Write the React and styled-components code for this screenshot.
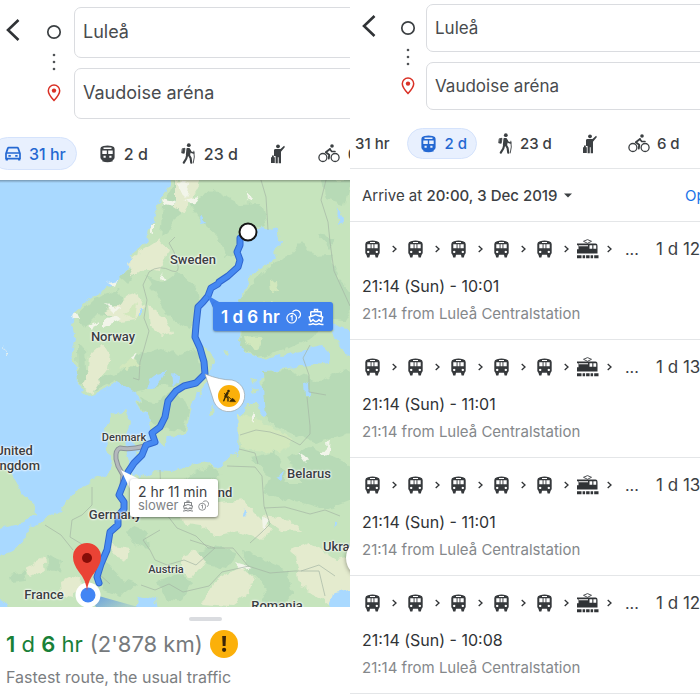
import styled, { createGlobalStyle } from "styled-components";
import { MdOutlineDirectionsBoat } from "react-icons/md";

const GlobalStyle = createGlobalStyle`
  *, *::before, *::after {
    box-sizing: border-box;
  }

  body {
    margin: 0;
    background: #fff;
    color: #3c4043;
    font-family: Inter, "Liberation Sans", sans-serif;
  }

  button, input {
    font: inherit;
    color: inherit;
  }
`;

const Page = styled.main`
  display: grid;
  grid-template-columns: 1fr 1fr;
  overflow: hidden;
`;

const Phone = styled.section`
  min-width: 0;
  overflow: hidden;
`;

/* Each phone screen is a little wider than its column and runs off the side */
const Screen = styled.div`
  width: calc(100% + 60px);
`;

const SearchHeader = styled.form`
  display: flex;
  align-items: flex-start;
  padding: ${(p) => (p.$compact ? "4px 8px 0 12px" : "7px 8px 0 6px")};
`;

const BackButton = styled.button`
  display: flex;
  align-items: center;
  width: ${(p) => (p.$compact ? 34 : 36)}px;
  height: ${(p) => (p.$compact ? 44 : 46)}px;
  padding: 0;
  border: 0;
  background: none;
`;

const StopMarks = styled.div`
  display: flex;
  flex-direction: column;
  align-items: center;
  justify-content: space-between;
  width: 24px;
  height: ${(p) => (p.$compact ? 106 : 111)}px;
  padding: ${(p) => (p.$compact ? "16px 0 15px" : "17px 0 16px")};
`;

const Fields = styled.div`
  flex: 1;
  display: flex;
  flex-direction: column;
  gap: 10px;
  margin-left: ${(p) => (p.$compact ? 6 : 8)}px;
`;

const Field = styled.input`
  width: 100%;
  height: ${(p) => (p.$compact ? 48 : 51)}px;
  padding: ${(p) => (p.$compact ? "0 8px" : "0 8px 2px")};
  border: 1px solid #dadce0;
  border-radius: 7px;
  background: #fff;
  color: #484b4e;
  font-size: ${(p) => (p.$compact ? 17 : 18)}px;
  outline: 0;
`;

const Modes = styled.nav`
  display: flex;
  gap: 8px;
  margin-left: ${(p) => (p.$compact ? -31 : -9)}px;
  padding: ${(p) => (p.$compact ? "18px 0 9px" : "18px 0 10px")};
`;

const ModeButton = styled.button`
  display: flex;
  align-items: center;
  gap: ${(p) => (p.$compact ? 7 : 8)}px;
  height: ${(p) => (p.$compact ? 31 : 33)}px;
  padding: ${(p) => (p.$compact ? "0 9px 0 12px" : "0 10px 0 13px")};
  border: 1px solid ${(p) => (p.$active ? "#d5e3fc" : "transparent")};
  border-radius: 17px;
  background: ${(p) => (p.$active ? "#e8f0fe" : "none")};
  color: ${(p) => (p.$active ? "#2468d2" : "#3c4043")};
  font-size: ${(p) => (p.$compact ? 15 : 16)}px;
  font-weight: 500;
  white-space: nowrap;

  svg {
    flex: none;
  }
`;

const MapView = styled.div`
  position: relative;
  aspect-ratio: 410 / 427;
  overflow: hidden;
  background: #a9d9ff;
`;

const MapDrawing = styled.svg`
  display: block;
  width: 100%;
  height: 100%;
`;

const Place = styled.span`
  position: absolute;
  transform: translate(-50%, -50%);
  color: #3b3f42;
  font: 500 ${(p) => (p.$small ? 11 : 13)}px/15px Roboto, sans-serif;
  text-align: center;
  white-space: pre;
  text-shadow: 0 0 2px #fff, 0 0 2px #fff, 0 0 3px #fff;
`;

const MainCallout = styled.div`
  position: absolute;
  display: flex;
  align-items: center;
  gap: 6px;
  height: 29px;
  padding: 0 8px;
  border-radius: 3px;
  background: #4082ed;
  color: #fff;
  font-size: 17px;
  font-weight: 600;
  white-space: nowrap;
  box-shadow: 0 1px 2px rgba(0, 0, 0, 0.35);
`;

const SideCallout = styled.div`
  position: absolute;
  width: 88px;
  height: 38px;
  padding: 5px 0 0 8px;
  border-radius: 3px;
  background: #fff;
  font-size: 14px;
  line-height: 15px;
  white-space: nowrap;
  box-shadow: 0 1px 3px rgba(0, 0, 0, 0.5);
`;

const CalloutNote = styled.div`
  display: flex;
  align-items: center;
  gap: 4px;
  color: #808386;
  font-size: 13px;
  line-height: 13px;
`;

const WorksBadge = styled.div`
  position: absolute;
  display: grid;
  place-items: center;
  width: 22px;
  height: 22px;
  border-radius: 50%;
  background: #fbb00a;
  color: #3a2a06;
  transform: translate(-50%, -50%);
`;

const LocateButton = styled.button`
  position: absolute;
  width: 40px;
  height: 40px;
  border: 0;
  border-radius: 50%;
  background: #fff;
  box-shadow: 0 1px 4px rgba(0, 0, 0, 0.4);
`;

const Sheet = styled.div`
  padding: 10px 6px 12px;
  background: #fff;
`;

const Handle = styled.div`
  width: 33px;
  height: 4px;
  margin: 0 auto;
  border-radius: 2px;
  background: #dadce0;
`;

const Summary = styled.h1`
  display: flex;
  align-items: center;
  gap: 7px;
  margin: 9px 0 0;
  color: #767a7d;
  font-size: 22px;
  font-weight: 400;
  line-height: 28px;
`;

const Green = styled.span`
  color: #188038;
  white-space: nowrap;

  b {
    font-weight: 600;
  }
`;

const Alert = styled.svg`
  flex: none;
`;

const SheetNote = styled.p`
  margin: 9px 0 0;
  color: #7b7e81;
  font-size: 16px;
  line-height: 20px;
`;

const ArriveRow = styled.div`
  display: flex;
  align-items: center;
  justify-content: space-between;
  height: 54px;
  padding: 0 20px 0 12px;
  border-top: 1px solid #e4e6e8;
  border-bottom: 1px solid #e4e6e8;
  font-size: 15px;
`;

const ArriveButton = styled.button`
  display: flex;
  align-items: center;
  gap: 6px;
  padding: 0;
  border: 0;
  background: none;
  white-space: pre;

  b {
    font-weight: 500;
  }
`;

const OptionsLink = styled.a`
  color: #1a73e8;
  text-decoration: none;
`;

const TripList = styled.ul`
  margin: 0;
  padding: 0;
  list-style: none;
`;

const Trip = styled.li`
  height: 118px;
  padding: 12px 0 0 12px;
  border-bottom: 1px solid #e4e6e8;
`;

const Legs = styled.div`
  display: flex;
  align-items: center;
  height: 30px;
  margin-left: 2px;
`;

const Leg = styled.span`
  display: flex;
  align-items: center;
  width: 43px;
`;

const LegIcon = styled.span`
  display: flex;
  justify-content: center;
  width: 17px;

  svg {
    flex: none;
  }
`;

const LegArrow = styled.svg`
  margin: 0 auto;
`;

const More = styled.span`
  width: 34px;
  padding-left: 3px;
  font-size: 16px;
`;

const Duration = styled.strong`
  font-size: 17px;
  font-weight: 400;
  white-space: nowrap;
`;

const TripTimes = styled.p`
  margin: 12px 0 0;
  color: #303336;
  font-size: 16px;
  line-height: 20px;
`;

const TripFrom = styled.p`
  margin: 8px 0 0;
  color: #85888b;
  font-size: 15px;
  line-height: 20px;
`;

const CarIcon = () => (
  <svg width="16" height="16" viewBox="0 0 16 16" fill="none" stroke="currentColor">
    <path d="M1 7.6 2.8 2.4Q3 1.7 3.7 1.7h8.6q.7 0 .9.7L15 7.6V12.6H1z" strokeWidth="1.7" strokeLinejoin="round" />
    <path d="M1.5 7h13" strokeWidth="1.5" />
    <path d="M1.8 12v2.6M14.2 12v2.6" strokeWidth="2.2" />
    <path d="M3.4 9.8h2.4M10.2 9.8h2.4" strokeWidth="1.7" />
  </svg>
);

const TransitIcon = () => (
  <svg width="17" height="18" viewBox="0 0 17 18">
    <path
      fill="currentColor"
      fillRule="evenodd"
      d="M4.5 1Q8.5 .2 12.5 1 15.600 1.600 15.600 4.200V12.500q0 2.200-2.200 2.700H3.600Q1.400 14.700 1.400 12.500V4.200Q1.400 1.600 4.500 1zM4.500 2.600v1.300h8V2.600zM3.300 5.500v3.600h4.500V5.500zM9.200 5.500v3.600h4.500V5.500zM4.500 10.800v2h2.200v-2zM10.300 10.800v2h2.200v-2z"
    />
    <path fill="currentColor" d="M3.500 15h10l.3 1.300q-5.300 2-10.600 0z" />
  </svg>
);

const TrainIcon = () => (
  <svg width="17" height="18" viewBox="0 0 17 18">
    <path
      fill="#36393c"
      fillRule="evenodd"
      d="M4 1.200Q8.500 0 13 1.200 15.700 1.800 15.700 4V12.800q0 1.700-1.700 2H3Q1.300 14.500 1.300 12.800V4Q1.300 1.800 4 1.200zM6 1.900v1h5v-1zM3.300 4.300v4h3.300v-4zM7.500 4.300v4h2v-4zM10.400 4.300v4h3.300v-4zM4.200 10.700a1.200 1.200 0 1 0 .01 0zM12.800 10.700a1.200 1.200 0 1 0 .01 0z"
    />
    <path fill="#36393c" d="M2.200 14h4l-.8 3.500H3.200zM10.800 14h4l-1 3.500h-2.200z" />
  </svg>
);

const TramIcon = () => (
  <svg width="23" height="20" viewBox="0 0 23 20">
    <path d="M11.500 4.300 7.500 2.300 11.500.6l4 1.700-4 2" fill="none" stroke="#3c4043" strokeWidth=".9" />
    <path
      fill="#303336"
      fillRule="evenodd"
      d="M1 4.600h18.500q2 0 2 2.200V14.500H1v-4.200h1.500V6.200H1zM3 6.300v1h9v-1zM13.500 6.300v3.500h2.800V6.300zM17.400 6.300v3.500h2.800V6.300z"
    />
    <path stroke="#303336" strokeWidth="3" strokeDasharray="4.500 1.100 2.500 1 3.500 1 2.500 1.100 4.500" d="M1 17.700h21.500" />
  </svg>
);

const HikerIcon = () => (
  <svg width="15" height="21" viewBox="0 0 15 21" fill="none" stroke="currentColor" strokeLinecap="round" strokeLinejoin="round">
    <circle cx="7.800" cy="2.200" r="1.900" fill="currentColor" stroke="none" />
    <path d="M6.200 5.800h2l1 2.300-.8 3.700-2.800.2z" fill="currentColor" strokeWidth="1.500" />
    <path d="M1.600 5.700 4 5.300 3.200 10.300 1 9.900z" fill="currentColor" strokeWidth=".8" />
    <path d="M8.700 7.300 10.200 9.200 12.700 9.900" strokeWidth="1.600" />
    <path d="M6.200 12 5.300 15.500 2.800 19.600M7.600 11.600l2 3.400.6 4.600" strokeWidth="2.100" />
    <path d="M12.800 8.200 13.300 14 12.200 20" strokeWidth=".9" />
  </svg>
);

const HailIcon = () => (
  <svg width="14" height="20" viewBox="0 0 14 20" fill="currentColor">
    <circle cx="7" cy="2.300" r="1.900" />
    <path d="M3 6Q3.300 5 4.500 5h5l3.600-3.200.8 1.200-3.900 4.700v11.600H7.700v-6h-.9v6H4.600V12H3z" />
    <path d="M0 13.200h1v-1.700h1.800v1.700h1v5.900H0z" />
  </svg>
);

const BikeIcon = () => (
  <svg width="22" height="19" viewBox="0 0 22 19" fill="none" stroke="currentColor" strokeLinecap="round" strokeLinejoin="round">
    <circle cx="4.900" cy="13.500" r="4" strokeWidth="1.300" />
    <circle cx="17.100" cy="13.500" r="4" strokeWidth="1.300" />
    <circle cx="14" cy="2" r="1.800" fill="currentColor" stroke="none" />
    <path d="M12 5 7.800 8.300 11.200 10.800 10.800 14.500" strokeWidth="1.900" />
    <path d="M12 5.200 13.700 7.500h3.300" strokeWidth="1.600" />
  </svg>
);

const DiggerIcon = () => (
  <svg width="14" height="14" viewBox="0 0 14 14" fill="none" stroke="currentColor" strokeLinecap="round" strokeLinejoin="round">
    <circle cx="6.500" cy="2" r="1.300" fill="currentColor" stroke="none" />
    <path d="M5.500 4 3.500 7.200" strokeWidth="2.400" />
    <path d="M3.500 7.500 1.800 11.800M4 7.500 6 9v3" strokeWidth="1.400" />
    <path d="M2.300 4.500 8.500 9.500" strokeWidth="1" />
    <path d="M8 12.300 10 9.500l1.500.5 1.700 2.300z" fill="currentColor" strokeWidth=".8" />
  </svg>
);

const TollIcon = ({ size = 15 }) => (
  <svg width={size} height={size} viewBox="0 0 15 15" fill="none" stroke="currentColor" strokeWidth="1.200">
    <circle cx="5.700" cy="9.200" r="4.800" />
    <path d="M6.500 3.200A4.300 4.300 0 1 1 12.300 9.200M4.500 7.700l1.600-1v5" />
  </svg>
);

const OriginIcon = () => (
  <svg width="16" height="16" viewBox="0 0 16 16">
    <circle cx="8" cy="8" r="6.200" fill="none" stroke="#3c4043" strokeWidth="1.700" />
  </svg>
);

const DotsIcon = () => (
  <svg width="4" height="18" viewBox="0 0 4 18" fill="#505356">
    <circle cx="2" cy="2" r="1.300" />
    <circle cx="2" cy="9" r="1.300" />
    <circle cx="2" cy="16" r="1.300" />
  </svg>
);

const DestinationIcon = () => (
  <svg width="14" height="18" viewBox="0 0 14 18">
    <path d="M7 16.500Q1.300 10.300 1.300 6.700a5.700 5.700 0 0 1 11.400 0Q12.700 10.300 7 16.500z" fill="none" stroke="#d93025" strokeWidth="1.500" />
    <circle cx="7" cy="6.600" r="2.200" fill="#d93025" />
  </svg>
);

const modes = [
  { id: "car", name: "Drive", label: "31 hr", icon: <CarIcon /> },
  { id: "transit", name: "Transit", label: "2 d", icon: <TransitIcon /> },
  { id: "walk", name: "Walk", label: "23 d", icon: <HikerIcon /> },
  { id: "ride", name: "Ride service", icon: <HailIcon /> },
  { id: "bike", name: "Cycle", label: "6 d", icon: <BikeIcon /> },
];

const places = [
  { name: "Sweden", x: 193, y: 259 },
  { name: "Norway", x: 113, y: 336 },
  { name: "Denmark", x: 124, y: 437, small: true },
  { name: "United\nKingdom", x: 14, y: 458 },
  { name: "Germany", x: 115, y: 514 },
  { name: "Poland", x: 212, y: 492 },
  { name: "Belarus", x: 309, y: 473 },
  { name: "Ukraine", x: 345, y: 546 },
  { name: "Romania", x: 277, y: 605 },
  { name: "Austria", x: 166, y: 569, small: true },
  { name: "France", x: 44, y: 594 },
];

const trips = [
  { times: "21:14 (Sun) - 10:01", duration: "1 d 12 hr" },
  { times: "21:14 (Sun) - 11:01", duration: "1 d 13 hr" },
  { times: "21:14 (Sun) - 11:01", duration: "1 d 13 hr" },
  { times: "21:14 (Sun) - 10:08", duration: "1 d 12 hr" },
];

// Map coordinates: x runs 0-410, y runs 180-607
const at = (x, y) => ({
  left: `${(x / 410) * 100}%`,
  top: `${((y - 180) / 427) * 100}%`,
});

const ROUTE =
  "M248 232 240 238 240 245 237 252 240 260 238 267 228 276 219 282 218 284 211 288 208 296 203 302 198 307 196 325 195 337 200 348 204 362 205 374 196 383 184 386 176 391 168 401 165 417 160 427 152 433 155 442 146 445 142 455 134 463 128 472 123 485 119 495 124 502 124 509 118 516 118 525 110 532 107 550 101 564 97 577 99 583";

const EuropeMap = () => (
  <MapDrawing viewBox="0 180 410 427" preserveAspectRatio="xMinYMin slice" aria-hidden="true">
    <defs>
      <filter id="coast" x="-5%" y="-5%" width="110%" height="110%">
        <feTurbulence type="fractalNoise" baseFrequency="0.11" numOctaves="2" seed="4" />
        <feDisplacementMap in="SourceGraphic" scale="9" xChannelSelector="R" yChannelSelector="G" />
      </filter>
      <linearGradient id="heading" x1="0" y1="0" x2="1" y2="0.500">
        <stop offset="0" stopColor="#4082ed" stopOpacity="0.800" />
        <stop offset="1" stopColor="#4082ed" stopOpacity="0.200" />
      </linearGradient>
      <linearGradient id="edge" x1="0" y1="0" x2="0" y2="1">
        <stop offset="0" stopColor="#000" stopOpacity="0.400" />
        <stop offset="1" stopColor="#000" stopOpacity="0" />
      </linearGradient>
    </defs>
    <g filter="url(#coast)">
      <path
        fill="#c6e4bd"
        d="M175 165 169 186 161 198 154 218 148 230 144 246 134 254 128 268 120 280 107 289 90 299 76 312 72 325 75 338 71 352 75 365 78 375 77 386 88 395 104 390 118 380 127 371 132 384 138 401 147 418 152 434 157 441 165 448 169 437 183 435 189 420 192 405 200 393 208 378 214 362 210 350 199 345 196 325 199 304 215 285 230 274 238 261 240 244 245 230 262 227 278 230 282 242 270 262 250 277 243 294 241 320 240 340 247 353 262 359 285 354 304 349 322 345 331 354 330 363 302 366 268 371 259 381 270 391 270 410 263 417 256 404 247 404 239 419 238 452 225 462 218 468 208 461 190 466 172 472 152 471 140 478 131 471 127 455 125 440 131 424 125 408 113 416 105 428 107 447 112 463 108 475 93 480 80 486 70 498 60 510 40 522 27 530 25 540 13 550-10 560V625H430V165z"
      />
      <path fill="#c6e4bd" d="M-12 462 6 465 14 478 22 492 34 503 35 514 24 523-10 531zM134 440 145 438 147 450 136 450zM137 452 145 456 136 458zM252 388 259 387 257 393 250 394zM250 380 255 379 254 384zM208 415 214 405 213 417zM222 352 229 351 228 356z" />
      {/* dark forests */}
      <g fill="#b7dab6">
        <path d="M190 205 213 190 240 204 262 203 267 226 247 228 240 250 226 258 218 237 205 225z" />
        <path d="M275 262 292 254 302 240 314 256 330 255 340 280 358 300 345 320 325 318 315 336 285 350 257 357 240 346 243 318 240 300 255 280z" />
        <path d="M163 205 174 182 192 180 183 205 172 225 160 237z" />
        <path d="M146 275 163 282 177 272 196 288 200 308 190 330 176 322 162 308z" />
        <path d="M94 299 118 290 125 303 112 316 98 314 84 328 76 316z" />
        <path d="M77 343 86 348 87 370 101 378 118 374 135 355 160 347 180 355 197 350 202 375 187 388 160 386 135 392 115 380 94 391 78 386z" />
        <path d="M120 278 135 262 139 272 127 284z" />
        <path d="M138 398 155 402 172 390 183 398 190 412 182 431 166 428 148 420z" />
        <path d="M263 371 292 370 318 382 345 370 410 380V440L350 433 316 444 285 430 266 420z" />
        <path d="M250 458 273 452 286 472 282 500 263 493 270 477z" />
        <path d="M286 457 310 447 340 460 360 470 352 500 327 510 305 503 280 497 283 484 304 484z" />
        <path d="M194 472 213 466 222 476 204 483 185 480z" />
        <path d="M196 553 214 545 238 552 226 568 206 565z" />
        <path d="M243 550 262 559 287 570 292 594 280 607 260 603 268 588 247 571z" />
        <path d="M96 558 109 564 124 580 136 584 121 597 103 590z" />
        <path d="M134 526 145 530 150 550 136 545 128 533z" />
        <path d="M46 555 62 561 60 573 48 568zM10 575 25 572 27 580 12 582z" />
        <path d="M158 582 178 574 192 582 181 602 166 599z" />
        <path d="M322 180 350 180 345 205 326 199zM318 235 335 238 329 247z" />
      </g>
      {/* open fields */}
      <g fill="#e4ebce">
        <path d="M127 262 142 250 158 240 168 249 160 270 145 267 132 278z" />
        <path d="M90 355 100 346 110 353 108 369 92 393 82 386 89 371z" />
        <path d="M120 302 137 291 145 307 134 320 121 322 104 311z" />
        <path d="M148 306 164 317 172 333 162 336 150 326z" />
        <path d="M177 507 199 489 221 503 244 500 258 515 271 529 260 540 240 531 216 537 201 526 182 523z" />
        <path d="M262 516 290 519 301 531 281 530z" />
        <path d="M240 566 254 579 249 592 230 606 202 604 213 583z" />
        <path d="M293 550 310 543 337 560 359 556 366 590 330 605 315 593 301 588z" />
        <path d="M61 582 75 575 82 583 74 597 62 594zM24 568 44 558 46 569 30 577z" />
        <path d="M181 556 195 551 204 561 193 578 181 573z" />
        <path d="M139 501 155 506 147 516zM114 546 130 549 126 561 112 556z" />
        <path d="M175 181 200 176 196 191 183 212 175 207z" />
      </g>
      <g fill="#d2e8bd">
        <path d="M237 413 255 419 273 427 294 440 280 454 258 450 240 447z" />
        <path d="M270 281 279 280 280 289 271 292zM244 336 262 337 258 349 246 345zM259 303 274 302 270 309z" />
        <path d="M125 315 137 303 135 320zM120 367 133 357 140 364 128 371z" />
      </g>
      <g fill="#f2f5ea">
        <path d="M161 199 175 202 174 207 164 205zM151 223 154 223 154 233 150 232zM106 304 122 308 114 312zM103 320 115 315 122 319 103 328zM108 282 117 280 115 286z" />
        <path d="M179 181 190 184 186 197 180 191zM184 200 199 196 194 206zM87 326 97 320 92 330zM162 272 167 280 164 281zM247 193 251 199 248 202zM287 321 300 319 294 326zM298 452 309 459 306 463zM249 416 254 411 254 424zM320 453 331 440 329 457zM262 516 268 521 263 532zM235 562 252 567 241 569zM131 357 137 352 133 360z" />
        <path d="M4 347 8 356 6 357zM72 315 76 312 80 320 73 320z" />
      </g>
      <g fill="#a9d9ff">
        <path d="M151 379 159 373 166 371 161 380 154 388 148 388zM172 374 179 379 174 389zM140 308 143 307 143 315 140 315z" />
        <path d="M333 324 352 331 360 350 347 356 339 345 332 337zM338 205 343 220 337 224zM200 216 206 223 201 224zM304 385 309 382 310 397 305 397zM275 476 284 472 281 481zM333 519 337 521 334 529zM244 508 247 516 243 517z" />
        <path d="M335 592 350 589 380 589V620H324zM140 595 155 599 158 615 134 615zM196 390 200 395 193 405zM-5 597 5 601 8 612H-5z" />
      </g>
    </g>
    <g fill="none" stroke="#a5b6a5" strokeWidth="0.700">
      <path d="M175 237 169 243 174 252 177 262Q181 274 172 271 159 264 149 272L143 285 147 300 144 318 149 331 144 349 140 362 139 380 133 378M261 180 266 197 268 230M326 180 321 200 328 222 330 242 334 271 350 306" />
      <path d="M310 345 303 358 309 375 309 392 326 395M240 435 256 430 270 432 285 437 300 445 310 434 310 426 307 397M227 466 255 467 262 476 264 506 270 524 262 532 250 543M239 449 255 453 258 464M264 508 285 507 310 514 325 510 340 516M160 470 161 497 167 515 177 528 196 536 208 548 233 548 248 566 270 573 295 571 319 571 325 596M301 571 319 565 335 576M190 540 215 548 196 565 184 560 167 565 155 560 150 550 143 540 160 530M92 487 92 505 82 515 72 520 70 537 85 546 105 558 99 574 110 584M45 525 61 535 73 550M141 585 155 590 169 584 183 592 209 586 222 572 249 566" />
    </g>

    <path d="M88 593 138 607H96z" fill="url(#heading)" />
    <path d="M145 446Q130 450 120 448 115 450 116 459L118 466 123 475 122 486" fill="none" stroke="#8b9299" strokeWidth="5" />
    <path d="M145 446Q130 450 120 448 115 450 116 459L118 466 123 475 122 486" fill="none" stroke="#b4b8bd" strokeWidth="3" />
    <path d={ROUTE} fill="none" stroke="#2f66ce" strokeWidth="7" strokeLinejoin="round" strokeLinecap="round" />
    <path d={ROUTE} fill="none" stroke="#4689f2" strokeWidth="5" strokeLinejoin="round" strokeLinecap="round" />
    <circle cx="248" cy="232" r="8.500" fill="#fff" stroke="#151515" strokeWidth="2" />
    <path d="M207 295 215 312 213 322 226 306z" fill="#4082ed" />
    <path d="M121 470 141 480 132 493z" fill="#fff" />
    <path d="M205 374 214 402A16 16 0 1 0 232 380Q220 380 205 374z" fill="#fff" stroke="#9aa5ab" strokeWidth="0.700" />
    <circle cx="88" cy="595" r="12.500" fill="#fff" />
    <circle cx="88" cy="595" r="7.500" fill="#4285f4" />
    <path d="M87 591Q86 580 79 572 73 564 73 557a14 14 0 0 1 28 0Q101 564 95 572 88 580 87 591z" fill="#ea4335" />
    <circle cx="87" cy="558" r="5" fill="#870d08" />
    <rect x="0" y="179" width="410" height="4" fill="url(#edge)" />
  </MapDrawing>
);

const DirectionsHeader = ({ compact, active }) => (
  <>
    <SearchHeader $compact={compact}>
      <BackButton type="button" aria-label="Back" $compact={compact}>
        <svg width="14" height="24" viewBox="0 0 14 24">
          <path d="M12.500 2 2 12l10.500 10" fill="none" stroke="#303336" strokeWidth="2.600" />
        </svg>
      </BackButton>
      <StopMarks $compact={compact}>
        <OriginIcon />
        <DotsIcon />
        <DestinationIcon />
      </StopMarks>
      <Fields $compact={compact}>
        <Field aria-label="Starting point" defaultValue="Luleå" $compact={compact} />
        <Field aria-label="Destination" defaultValue="Vaudoise aréna" $compact={compact} />
      </Fields>
    </SearchHeader>
    <Modes $compact={compact}>
      {modes.map((mode) => (
        <ModeButton
          key={mode.id}
          type="button"
          aria-label={mode.label ? undefined : mode.name}
          $active={mode.id === active}
          $compact={compact}
        >
          {mode.icon}
          {mode.label}
        </ModeButton>
      ))}
    </Modes>
  </>
);

const DrivingScreen = () => (
  <Phone>
    <Screen>
      <DirectionsHeader active="car" />
      <MapView>
        <EuropeMap />
        {places.map((place) => (
          <Place key={place.name} $small={place.small} style={at(place.x, place.y)}>
            {place.name}
          </Place>
        ))}
        <MainCallout style={at(213, 302)}>
          1 d 6 hr
          <TollIcon />
          <MdOutlineDirectionsBoat size={18} />
        </MainCallout>
        <SideCallout style={at(130, 479)}>
          2 hr 11 min
          <CalloutNote>
            slower
            <MdOutlineDirectionsBoat size={12} />
            <TollIcon size={11} />
          </CalloutNote>
        </SideCallout>
        <WorksBadge style={at(229, 396)}>
          <DiggerIcon />
        </WorksBadge>
        <LocateButton type="button" aria-label="My location" style={at(346, 538)} />
      </MapView>
      <Sheet>
        <Handle />
        <Summary>
          <Green>
            <b>1</b> d <b>6</b> hr
          </Green>
          <span>(2'878 km)</span>
          <Alert width="28" height="28" viewBox="0 0 28 28" aria-label="Warning">
            <circle cx="14" cy="14" r="14" fill="#fbb00a" />
            <path d="M12.200 6h3.800l-.5 10h-2.800z" fill="#3a2508" />
            <circle cx="14.100" cy="19.800" r="2.100" fill="#3a2508" />
          </Alert>
        </Summary>
        <SheetNote>Fastest route, the usual traffic</SheetNote>
      </Sheet>
    </Screen>
  </Phone>
);

const TransitScreen = () => (
  <Phone>
    <Screen>
      <DirectionsHeader compact active="transit" />
      <ArriveRow>
        <ArriveButton type="button">
          <span>
            Arrive at <b>20:00, 3 Dec 2019</b>
          </span>
          <svg width="8" height="5" viewBox="0 0 8 5">
            <path d="M0 .5h8l-4 4z" fill="#3c4043" />
          </svg>
        </ArriveButton>
        <OptionsLink href="#options">Options</OptionsLink>
      </ArriveRow>
      <TripList>
        {trips.map((trip, index) => (
          <Trip key={index}>
            <Legs>
              {["train", "train", "train", "train", "train", "tram"].map((kind, leg) => (
                <Leg key={leg}>
                  <LegIcon>{kind === "tram" ? <TramIcon /> : <TrainIcon />}</LegIcon>
                  <LegArrow width="5" height="8" viewBox="0 0 5 8">
                    <path d="M.7 1 4 4 .7 7" fill="none" stroke="#303336" strokeWidth="1.300" />
                  </LegArrow>
                </Leg>
              ))}
              <More>...</More>
              <Duration>{trip.duration}</Duration>
            </Legs>
            <TripTimes>{trip.times}</TripTimes>
            <TripFrom>21:14 from Luleå Centralstation</TripFrom>
          </Trip>
        ))}
      </TripList>
    </Screen>
  </Phone>
);

const App = () => (
  <>
    <GlobalStyle />
    <Page>
      <DrivingScreen />
      <TransitScreen />
    </Page>
  </>
);

export default App;
